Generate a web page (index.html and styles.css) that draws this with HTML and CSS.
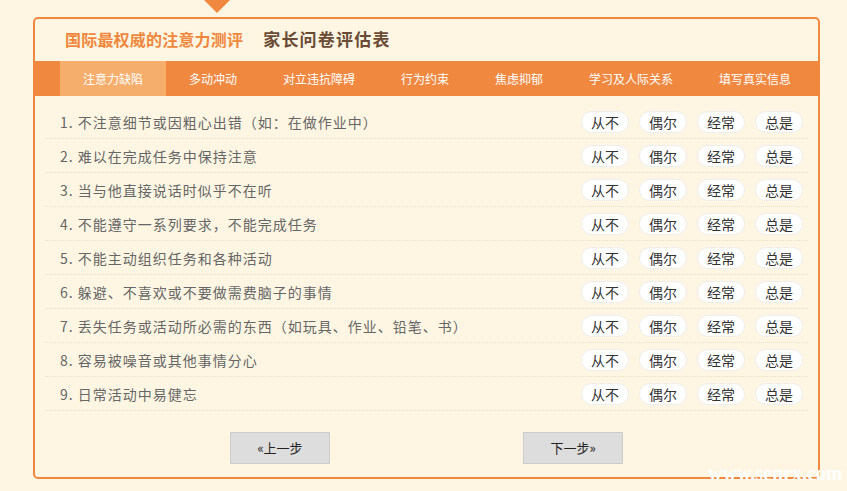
FILE: index.html
```html
<!DOCTYPE html>
<html lang="zh-CN">
<head>
<meta charset="utf-8">
<title>家长问卷评估表</title>
<link rel="stylesheet" href="styles.css">
</head>
<body>
<div class="wrap">
  <div class="arrow"></div>
  <div class="card">
    <div class="head">
      <span class="brand">国际最权威的注意力测评</span>
      <span class="title">家长问卷评估表</span>
    </div>
    <div class="nav">
      <span class="tab active">注意力缺陷</span>
      <span class="tab">多动冲动</span>
      <span class="tab">对立违抗障碍</span>
      <span class="tab">行为约束</span>
      <span class="tab">焦虑抑郁</span>
      <span class="tab">学习及人际关系</span>
      <span class="tab">填写真实信息</span>
    </div>
    <div class="body">
      <div class="row"><span class="q">1. 不注意细节或因粗心出错（如：在做作业中）</span><span class="opts"><span class="pill">从不</span><span class="pill">偶尔</span><span class="pill">经常</span><span class="pill">总是</span></span></div>
      <div class="row"><span class="q">2. 难以在完成任务中保持注意</span><span class="opts"><span class="pill">从不</span><span class="pill">偶尔</span><span class="pill">经常</span><span class="pill">总是</span></span></div>
      <div class="row"><span class="q">3. 当与他直接说话时似乎不在听</span><span class="opts"><span class="pill">从不</span><span class="pill">偶尔</span><span class="pill">经常</span><span class="pill">总是</span></span></div>
      <div class="row"><span class="q">4. 不能遵守一系列要求，不能完成任务</span><span class="opts"><span class="pill">从不</span><span class="pill">偶尔</span><span class="pill">经常</span><span class="pill">总是</span></span></div>
      <div class="row"><span class="q">5. 不能主动组织任务和各种活动</span><span class="opts"><span class="pill">从不</span><span class="pill">偶尔</span><span class="pill">经常</span><span class="pill">总是</span></span></div>
      <div class="row"><span class="q">6. 躲避、不喜欢或不要做需费脑子的事情</span><span class="opts"><span class="pill">从不</span><span class="pill">偶尔</span><span class="pill">经常</span><span class="pill">总是</span></span></div>
      <div class="row"><span class="q">7. 丢失任务或活动所必需的东西（如玩具、作业、铅笔、书）</span><span class="opts"><span class="pill">从不</span><span class="pill">偶尔</span><span class="pill">经常</span><span class="pill">总是</span></span></div>
      <div class="row"><span class="q">8. 容易被噪音或其他事情分心</span><span class="opts"><span class="pill">从不</span><span class="pill">偶尔</span><span class="pill">经常</span><span class="pill">总是</span></span></div>
      <div class="row"><span class="q">9. 日常活动中易健忘</span><span class="opts"><span class="pill">从不</span><span class="pill">偶尔</span><span class="pill">经常</span><span class="pill">总是</span></span></div>
      <div class="actions">
        <span class="btn">«上一步</span>
        <span class="btn">下一步»</span>
      </div>
    </div>
  </div>
</div>
<div class="watermark">www.senrx.com</div>
</body>
</html>
```

FILE: styles.css
```css
html, body {
  margin: 0;
  padding: 0;
  background: #fef6e3;
  font-family: "Noto Sans CJK SC", "Noto Sans", sans-serif;
}
.wrap {
  padding-left: 33px;
  width: 787px;
}
.arrow {
  margin-left: 171px;
  width: 0;
  height: 0;
  border-left: 13px solid transparent;
  border-right: 13px solid transparent;
  border-top: 13px solid #f0883f;
}
.card {
  margin-top: 4px;
  box-sizing: border-box;
  width: 787px;
  height: 462px;
  border: 2px solid #f0883f;
  border-radius: 5px;
  background: #fef6e3;
}
.head {
  box-sizing: border-box;
  height: 42px;
  padding-bottom: 2px;
  display: flex;
  align-items: center;
  padding-left: 30px;
}
.brand {
  color: #ef873c;
  font-size: 16px;
  font-weight: bold;
  letter-spacing: 0.2px;
  line-height: 20px;
}
.title {
  margin-left: 20px;
  color: #6a4b36;
  font-size: 17px;
  font-weight: bold;
  letter-spacing: 1.2px;
  line-height: 20px;
}
.nav {
  height: 35px;
  background: #f0883f;
  display: flex;
  padding-left: 25px;
}
.tab {
  padding: 0 23px;
  color: #fff;
  font-size: 12px;
  line-height: 35px;
}
.tab.active {
  background: #f5ae6b;
}
.body {
  padding: 9px 10px 0;
}
.row {
  height: 33px;
  border-bottom: 1px dotted #eadfc9;
  display: flex;
  align-items: center;
  justify-content: space-between;
  padding: 0 5px 0 15px;
}
.q {
  color: #666;
  font-size: 14px;
  letter-spacing: 1px;
  line-height: 20px;
}
.opts {
  display: flex;
  gap: 10px;
}
.pill {
  box-sizing: border-box;
  width: 48px;
  height: 22px;
  border: 1px solid #eee;
  border-radius: 11px;
  background: #fff;
  color: #333;
  font-size: 14px;
  line-height: 20px;
  text-align: center;
}
.actions {
  margin-top: 21px;
  display: flex;
  justify-content: center;
  gap: 193px;
}
.btn {
  box-sizing: border-box;
  width: 100px;
  height: 32px;
  background: #dddddd;
  border: 1px solid #cccccc;
  color: #222;
  font-size: 13px;
  line-height: 30px;
  text-align: center;
}
.watermark {
  position: absolute;
  left: 708px;
  top: 462px;
  color: #fff;
  font-family: "Liberation Serif", serif;
  font-weight: bold;
  font-size: 20px;
  line-height: 22px;
}
```
